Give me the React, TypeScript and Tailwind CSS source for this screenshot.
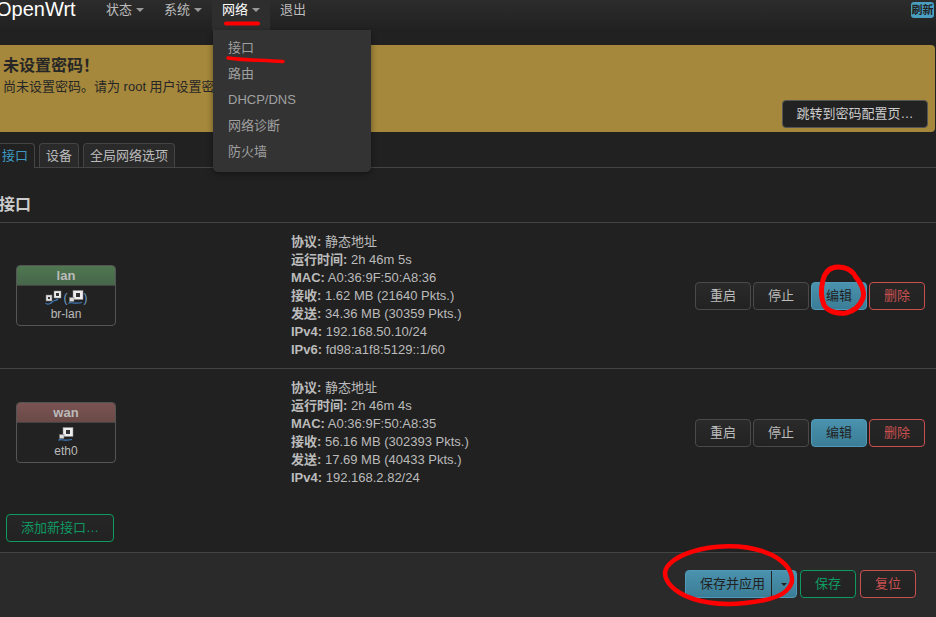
const font = { fontFamily: '"Liberation Sans", "Noto Sans CJK SC", sans-serif' };

const menuItems = ['接口', '路由', 'DHCP/DNS', '网络诊断', '防火墙'];

const lanInfo = [
  ['协议:', '静态地址'],
  ['运行时间:', '2h 46m 5s'],
  ['MAC:', 'A0:36:9F:50:A8:36'],
  ['接收:', '1.62 MB (21640 Pkts.)'],
  ['发送:', '34.36 MB (30359 Pkts.)'],
  ['IPv4:', '192.168.50.10/24'],
  ['IPv6:', 'fd98:a1f8:5129::1/60'],
];

const wanInfo = [
  ['协议:', '静态地址'],
  ['运行时间:', '2h 46m 4s'],
  ['MAC:', 'A0:36:9F:50:A8:35'],
  ['接收:', '56.16 MB (302393 Pkts.)'],
  ['发送:', '17.69 MB (40433 Pkts.)'],
  ['IPv4:', '192.168.2.82/24'],
];

function Caret() {
  return <span className="ml-[4px] inline-block h-0 w-0 border-x-[4px] border-t-[4px] border-x-transparent border-t-[#999]" />;
}

function NavItem({ label, active, caret = true }: { label: string; active?: boolean; caret?: boolean }) {
  return (
    <div
      className={`flex h-[30px] items-start px-[10px] pt-[1px] text-[13px] leading-[17px] ${
        active ? 'bg-[#2e2e2e] text-white' : 'text-[#bbb]'
      }`}
    >
      {label}
      {caret && (
        <span className="flex h-[17px] items-center">
          <Caret />
        </span>
      )}
    </div>
  );
}

function Port() {
  return (
    <svg width="16" height="15" viewBox="0 0 16 15" className="shrink-0">
      <rect x="5" y="0.5" width="10" height="9" fill="#eee" stroke="#888" strokeWidth="0.5" />
      <rect x="8" y="3" width="4" height="4" fill="#333" />
      <rect x="1.5" y="7.5" width="4.5" height="4" fill="#ddd" stroke="#777" strokeWidth="0.5" />
      <path d="M0.5 13.5 C 2 11, 3 14.5, 14 12.5" fill="none" stroke="#3f7fc4" strokeWidth="1.2" />
    </svg>
  );
}

function BridgePorts() {
  return (
    <svg width="17" height="15" viewBox="0 0 17 15" className="shrink-0">
      <rect x="1" y="5" width="6" height="6" fill="#ddd" stroke="#777" strokeWidth="0.5" />
      <rect x="3" y="7" width="2" height="2" fill="#333" />
      <rect x="9" y="1" width="7" height="7" fill="#eee" stroke="#888" strokeWidth="0.5" />
      <rect x="11" y="3" width="3" height="3" fill="#333" />
      <path d="M0.5 13 C 2 15, 6 14, 7 12 C 9 10, 11 11, 13 9" fill="none" stroke="#3f7fc4" strokeWidth="1.2" />
    </svg>
  );
}

function Badge({ name, device, color, children }: { name: string; device: string; color: string; children: React.ReactNode }) {
  return (
    <div className="w-[100px] shrink-0 overflow-hidden rounded-[4px] border border-[#555] bg-[#222] text-center text-[12px] text-[#bbb]">
      <div className={`h-[20px] border-b border-[#444] text-[13px] font-bold leading-[19px] ${color}`}>{name}</div>
      <div className="flex h-[20px] items-center justify-center pt-[3px]">{children}</div>
      <div className="h-[19px] leading-[16px]">{device}</div>
    </div>
  );
}

function Btn({ label, className, w = 'w-[56px]' }: { label: string; className: string; w?: string }) {
  return (
    <div className={`flex h-[28px] items-center justify-center rounded-[4px] border text-[13px] ${w} ${className}`}>
      {label}
    </div>
  );
}

const plain = 'border-[#4a4a4a] bg-gradient-to-b from-[#2a2a2a] to-[#222] text-[#bbb]';
const blue = 'border-[#4f9ab8] bg-gradient-to-b from-[#4a92ae] to-[#3b7d96] text-[#222]';
const red = 'border-[#c9504f] bg-gradient-to-b from-[#262626] to-[#222] text-[#c9504f]';
const green = 'border-[#0f9a62] bg-gradient-to-b from-[#262626] to-[#222] text-[#0f9a62]';

function Actions() {
  return (
    <div className="ml-auto mr-[11px] flex gap-[2px]">
      <Btn label="重启" className={plain} />
      <Btn label="停止" className={plain} />
      <Btn label="编辑" className={blue} />
      <Btn label="删除" className={red} />
    </div>
  );
}

function Info({ rows }: { rows: string[][] }) {
  return (
    <div className="ml-[175px] text-[13px] leading-[18px] text-[#bbb]">
      {rows.map(([k, v]) => (
        <div key={k} className="whitespace-nowrap">
          <b>{k}</b> {v}
        </div>
      ))}
    </div>
  );
}

export default function App() {
  return (
    <div className="relative h-[617px] w-[936px] overflow-hidden bg-[#212121]" style={font}>
      {/* top bar */}
      <header className="flex h-[30px] items-start bg-gradient-to-b from-[#2c2c2c] to-[#212121]">
        <div className="w-[96px] text-[20px] leading-[19px] text-white">
          <span className="-ml-[4px] block">OpenWrt</span>
        </div>
        <NavItem label="状态" />
        <NavItem label="系统" />
        <NavItem label="网络" active />
        <NavItem label="退出" caret={false} />
        <div className="ml-auto mr-[2px] mt-[2px] flex h-[16px] w-[23px] items-center justify-center rounded-[3px] bg-[#4a9fc0] text-[11px] font-bold text-[#222]">
          刷新
        </div>
      </header>

      {/* password warning */}
      <div className="mr-[1px] mt-[15px] flex h-[87px] rounded-r-[4px] bg-[#a5883b] pl-[3px] text-[#262626]">
        <div className="pt-[12px]">
          <div className="text-[16px] font-bold leading-[18px]">未设置密码！</div>
          <div className="mt-[3px] text-[13px] leading-[18px]">尚未设置密码。请为 root 用户设置密码。</div>
        </div>
        <div className="ml-auto mr-[7px] mt-[55px] flex h-[28px] w-[146px] items-center justify-center rounded-[4px] border border-[#555] bg-[#222] text-[13px] text-[#ccc]">
          跳转到密码配置页…
        </div>
      </div>

      {/* tabs */}
      <div className="mt-[11px] flex h-[25px] gap-[4px] border-b border-[#444] text-[13px]">
        <div className="-mb-[1px] -ml-[6px] flex h-[25px] w-[41px] items-center justify-center rounded-t-[4px] border border-b-0 border-[#444] bg-[#212121] pl-[1px] text-[#3d9bc4]">
          接口
        </div>
        <div className="flex h-[24px] w-[40px] items-center justify-center rounded-t-[4px] border border-b-0 border-[#444] bg-[#2a2a2a] text-[#bbb]">
          设备
        </div>
        <div className="flex h-[24px] w-[92px] items-center justify-center rounded-t-[4px] border border-b-0 border-[#444] bg-[#2a2a2a] text-[#bbb]">
          全局网络选项
        </div>
      </div>

      <h2 className="-ml-[1px] flex h-[54px] items-end pb-[7px] text-[16px] font-bold leading-[20px] text-[#ccc]">接口</h2>

      {/* interfaces */}
      <div className="flex h-[147px] items-center border-y border-[#444] pl-[16px]">
        <Badge name="lan" device="br-lan" color="bg-gradient-to-b from-[#4f7750] to-[#46664a]">
          <BridgePorts />
          <span className="ml-[2px] text-[12px] text-[#6fa0c8]">(</span>
          <Port />
          <span className="text-[12px] text-[#6fa0c8]">)</span>
        </Badge>
        <Info rows={lanInfo} />
        <Actions />
      </div>
      <div className="flex h-[127px] items-center pl-[16px]">
        <Badge name="wan" device="eth0" color="bg-gradient-to-b from-[#7a5351] to-[#6a4a48]">
          <Port />
        </Badge>
        <Info rows={wanInfo} />
        <Actions />
      </div>

      <div className="mt-[18px] pl-[6px]">
        <Btn label="添加新接口…" className={green} w="w-[108px]" />
      </div>

      {/* save bar */}
      <footer className="mt-[10px] flex h-[65px] items-start justify-end border-t border-[#444] bg-[#2a2a2a] pr-[20px] pt-[17px]">
        <div className="flex h-[28px] w-[112px] overflow-hidden rounded-[4px] border border-[#4f9ab8] bg-gradient-to-b from-[#4a92ae] to-[#3b7d96] text-[13px] text-[#222]">
          <div className="flex w-[86px] items-center justify-center border-r border-[#222] pl-[8px]">保存并应用</div>
          <div className="flex flex-1 items-center justify-center">
            <span className="h-0 w-0 border-x-[3px] border-t-[3px] border-x-transparent border-t-[#222]" />
          </div>
        </div>
        <Btn label="保存" className={`ml-[3px] ${green}`} />
        <Btn label="复位" className={`ml-[4px] ${red}`} />
      </footer>

      {/* open dropdown */}
      <div className="absolute left-[213px] top-[30px] h-[142px] w-[158px] rounded-b-[5px] bg-[#333] pt-[5px] text-[13px] text-[#a0a0a0] shadow-[0_2px_6px_rgba(0,0,0,0.4)]">
        {menuItems.map((item) => (
          <div key={item} className="flex h-[26px] items-center pl-[15px]">
            {item}
          </div>
        ))}
      </div>

      {/* red marker scribbles on the screenshot */}
      <svg className="pointer-events-none absolute left-0 top-0" width="936" height="617" fill="none" stroke="#f00" strokeLinecap="round" strokeLinejoin="round">
        <path d="M226 23.5 L258 23.5" strokeWidth="4" />
        <path d="M228 58 C 240 60, 260 60, 283 61.5" strokeWidth="3.5" />
        <path d="M854 274 C 850 269, 845 267, 838 267 C 830 267, 825 272, 823 280 C 821 288, 821 298, 824 305 C 828 312, 838 314, 846 313 C 854 311, 860 306, 863 298 C 865 291, 860 282, 855 276" strokeWidth="5" />
        <path d="M792 580 C 792 570, 785 562, 772 555 C 755 547, 735 545, 715 547 C 695 549, 675 556, 667 567 C 662 575, 667 585, 680 593 C 695 602, 720 606, 745 603 C 765 601, 780 597, 786 591 C 790 587, 792 584, 792 580" strokeWidth="4.5" />
      </svg>
    </div>
  );
}
